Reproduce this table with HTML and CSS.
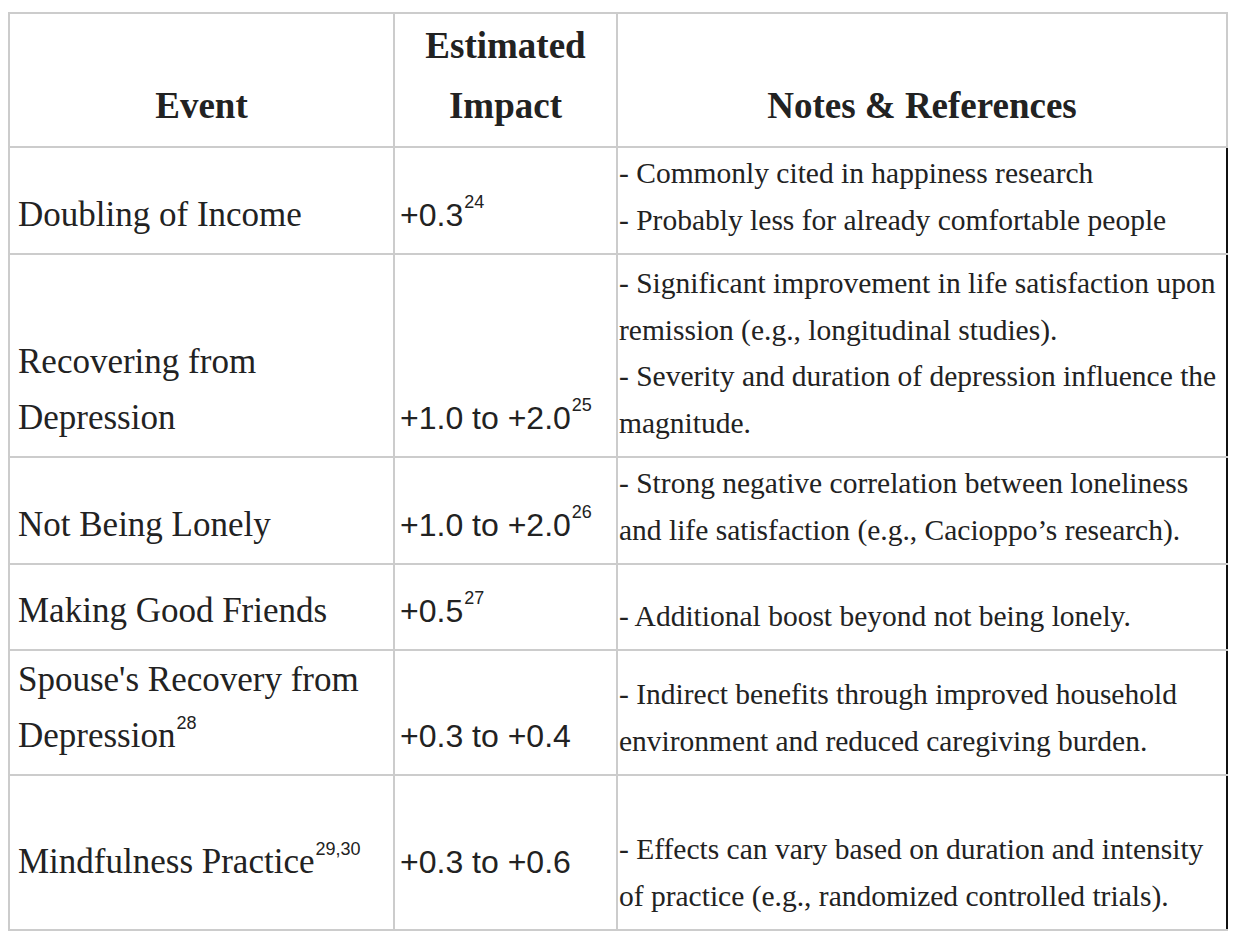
FILE: index.html
```html
<!DOCTYPE html>
<html lang="en">
<head>
<meta charset="utf-8">
<title>Life events and estimated impact</title>
<link rel="stylesheet" href="styles.css">
</head>
<body>
<table class="impact-table">
  <colgroup>
    <col class="col-event">
    <col class="col-impact">
    <col class="col-notes">
  </colgroup>
  <thead>
    <tr class="row-head">
      <th>Event</th>
      <th>Estimated Impact</th>
      <th>Notes &amp; References</th>
    </tr>
  </thead>
  <tbody>
    <tr class="row-1">
      <td class="event">Doubling of Income</td>
      <td class="impact">+0.3<sup>24</sup></td>
      <td class="notes">- Commonly cited in happiness research<br>- Probably less for already comfortable people</td>
    </tr>
    <tr class="row-2">
      <td class="event">Recovering from Depression</td>
      <td class="impact">+1.0 to +2.0<sup>25</sup></td>
      <td class="notes">- Significant improvement in life satisfaction upon remission (e.g., longitudinal studies).<br>- Severity and duration of depression influence the magnitude.</td>
    </tr>
    <tr class="row-3">
      <td class="event">Not Being Lonely</td>
      <td class="impact">+1.0 to +2.0<sup>26</sup></td>
      <td class="notes">- Strong negative correlation between loneliness and life satisfaction (e.g., Cacioppo’s research).</td>
    </tr>
    <tr class="row-4">
      <td class="event">Making Good Friends</td>
      <td class="impact">+0.5<sup>27</sup></td>
      <td class="notes">- Additional boost beyond not being lonely.</td>
    </tr>
    <tr class="row-5">
      <td class="event">Spouse's Recovery from Depression<sup>28</sup></td>
      <td class="impact">+0.3 to +0.4</td>
      <td class="notes">- Indirect benefits through improved household environment and reduced caregiving burden.</td>
    </tr>
    <tr class="row-6">
      <td class="event lifted">Mindfulness Practice<sup>29,30</sup></td>
      <td class="impact lifted">+0.3 to +0.6</td>
      <td class="notes">- Effects can vary based on duration and intensity of practice (e.g., randomized controlled trials).</td>
    </tr>
  </tbody>
</table>
</body>
</html>
```

FILE: styles.css
```css
html, body {
  background: #ffffff;
}

body {
  margin: 8px;
  color: #222222;
  font-family: "Liberation Serif", "Times New Roman", serif;
}

.impact-table {
  margin-top: 4px;
  width: 100%;
  table-layout: fixed;
  border-collapse: collapse;
  border: 2px solid #cccccc;
}

.col-event { width: 385px; }
.col-impact { width: 223px; }

.impact-table th,
.impact-table td {
  border: 2px solid #cccccc;
  vertical-align: bottom;
}

.impact-table th {
  font-size: 37px;
  font-weight: bold;
  line-height: 60px;
  text-align: center;
  padding: 0 6px 10px;
}

.impact-table td.notes:last-child {
  border-right-color: #111111;
}

.event {
  font-size: 35px;
  line-height: 56px;
  padding: 0 6px 10px 8px;
}

.impact {
  font-family: "Liberation Sans", Arial, sans-serif;
  font-size: 32px;
  line-height: 56px;
  padding: 0 4px 10px 5px;
}

.notes {
  font-size: 29.5px;
  line-height: 46.5px;
  padding: 0 4px 10px 1px;
}

.lifted {
  padding-bottom: 39px;
}

sup {
  font-family: "Liberation Sans", Arial, sans-serif;
  font-size: 18px;
  line-height: 0;
  vertical-align: 18px;
  margin-left: 1px;
}

.row-head { height: 134px; }
.row-1 { height: 107px; }
.row-2 { height: 203px; }
.row-3 { height: 107px; }
.row-4 { height: 86px; }
.row-5 { height: 125px; }
.row-6 { height: 155px; }
```
